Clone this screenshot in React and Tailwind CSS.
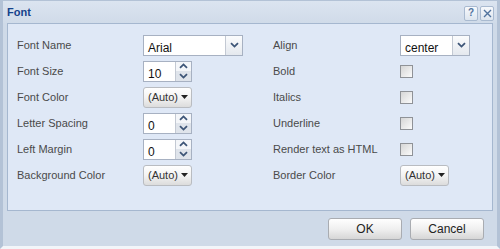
import React from 'react';

const font = { fontFamily: '"Liberation Sans", Arial, sans-serif' };

const Chevron = ({ up = false }) => (
    <svg width="9" height="6" viewBox="0 0 9 6" className={up ? 'rotate-180' : ''}>
        <path d="M1 1.2 L4.5 4.6 L8 1.2" fill="none" stroke="#3d5577" strokeWidth="1.8" />
    </svg>
);

const Select = ({ value, width }) => (
    <div className={`flex h-[21px] ${width} border border-[#a7b1c2] bg-white`}>
        <div className="flex-1 pl-[4px] pt-[3px] text-[12px] text-[#111]">{value}</div>
        <div className="w-[17px] border-l border-[#c3c9d3] bg-gradient-to-b from-[#fbfcfd] to-[#e4e8ee] flex items-center justify-center">
            <Chevron />
        </div>
    </div>
);

const Spinner = ({ value }) => (
    <div className="flex h-[21px] w-[49px] border border-[#a7b1c2] bg-white">
        <div className="flex-1 pl-[4px] pt-[3px] text-[12px] text-[#111]">{value}</div>
        <div className="w-[16px] flex flex-col border-l border-[#c3c9d3]">
            <div className="flex-1 bg-[#f4f6f9] flex items-center justify-center"><Chevron up /></div>
            <div className="flex-1 bg-[#dfe4eb] flex items-center justify-center"><Chevron /></div>
        </div>
    </div>
);

const ColorButton = () => (
    <div className="flex items-center h-[21px] w-[49px] rounded-[3px] border border-[#b9bcc1] bg-gradient-to-b from-[#ffffff] via-[#f3f3f3] to-[#dcdcdc] pl-[4px] text-[11px] text-[#333]">
        (Auto)
        <svg width="7" height="4" viewBox="0 0 7 4" className="ml-[3px]">
            <path d="M0 0 L7 0 L3.5 4 Z" fill="#222" />
        </svg>
    </div>
);

const Checkbox = () => (
    <div className="w-[13px] h-[13px] border border-[#8f9297] bg-gradient-to-br from-[#d6d6d6] to-[#fbfbfb]" />
);

const Label = ({ children }) => (
    <div className="text-[11px] text-[#4a4a4a]">{children}</div>
);

const rows = [
    ['Font Name', <Select value="Arial" width="w-[100px]" />, 'Align', <Select value="center" width="w-[70px]" />],
    ['Font Size', <Spinner value="10" />, 'Bold', <Checkbox />],
    ['Font Color', <ColorButton />, 'Italics', <Checkbox />],
    ['Letter Spacing', <Spinner value="0" />, 'Underline', <Checkbox />],
    ['Left Margin', <Spinner value="0" />, 'Render text as HTML', <Checkbox />],
    ['Background Color', <ColorButton />, 'Border Color', <ColorButton />],
];

const HeaderBtn = ({ children }) => (
    <div className="w-[14px] h-[15px] border border-[#a9bad0] rounded-[2px] bg-gradient-to-b from-[#f7f9fc] to-[#dde5ef] flex items-center justify-center">
        {children}
    </div>
);

const DialogButton = ({ label }) => (
    <div className="w-[74px] h-[22px] rounded-[3px] border border-[#a9acb1] bg-gradient-to-b from-[#ffffff] via-[#f0f0f0] to-[#d6d6d6] flex items-center justify-center text-[12px] text-[#222]">
        {label}
    </div>
);

export default function App() {
    return (
        <div style={font} className="w-[500px] h-[249px] flex flex-col bg-[#cfdae8] border-l-[3px] border-r-[3px] border-b-[3px] border-l-[#b3c2d6] border-r-[#b3c2d6] border-b-[#f2f5f9] border-t border-t-[#b3c2d6]">
            {/* Title bar */}
            <div className="h-[22px] flex items-center justify-between pl-[4px] pr-[3px] bg-gradient-to-b from-[#dbe4f0] to-[#d0dbe9]">
                <span className="text-[11px] font-bold text-[#15428b] pt-[1px]">Font</span>
                <div className="flex gap-[2px] pt-[2px]">
                    <HeaderBtn>
                        <span className="text-[10px] font-bold text-[#51739e] leading-none">?</span>
                    </HeaderBtn>
                    <HeaderBtn>
                        <svg width="9" height="9" viewBox="0 0 9 9">
                            <path d="M1 1 L8 8 M8 1 L1 8" stroke="#51739e" strokeWidth="1.4" />
                        </svg>
                    </HeaderBtn>
                </div>
            </div>

            {/* Body panel */}
            <div className="mx-[4px] h-[188px] border border-[#a5b7cf] bg-[#dfe8f6] pt-[8px] pl-[9px]">
                <div className="grid grid-cols-[126px_130px_126px_1fr]">
                    {rows.map(([l1, c1, l2, c2], i) => (
                        <React.Fragment key={i}>
                            <div className="h-[26px] flex items-center"><Label>{l1}</Label></div>
                            <div className="h-[26px] flex items-center">{c1}</div>
                            <div className="h-[26px] flex items-center"><Label>{l2}</Label></div>
                            <div className="h-[26px] flex items-center pl-[1px]">{c2}</div>
                        </React.Fragment>
                    ))}
                </div>
            </div>

            {/* Footer */}
            <div className="flex-1 flex items-center justify-end gap-[8px] pr-[13px]">
                <DialogButton label="OK" />
                <DialogButton label="Cancel" />
            </div>
        </div>
    );
}
